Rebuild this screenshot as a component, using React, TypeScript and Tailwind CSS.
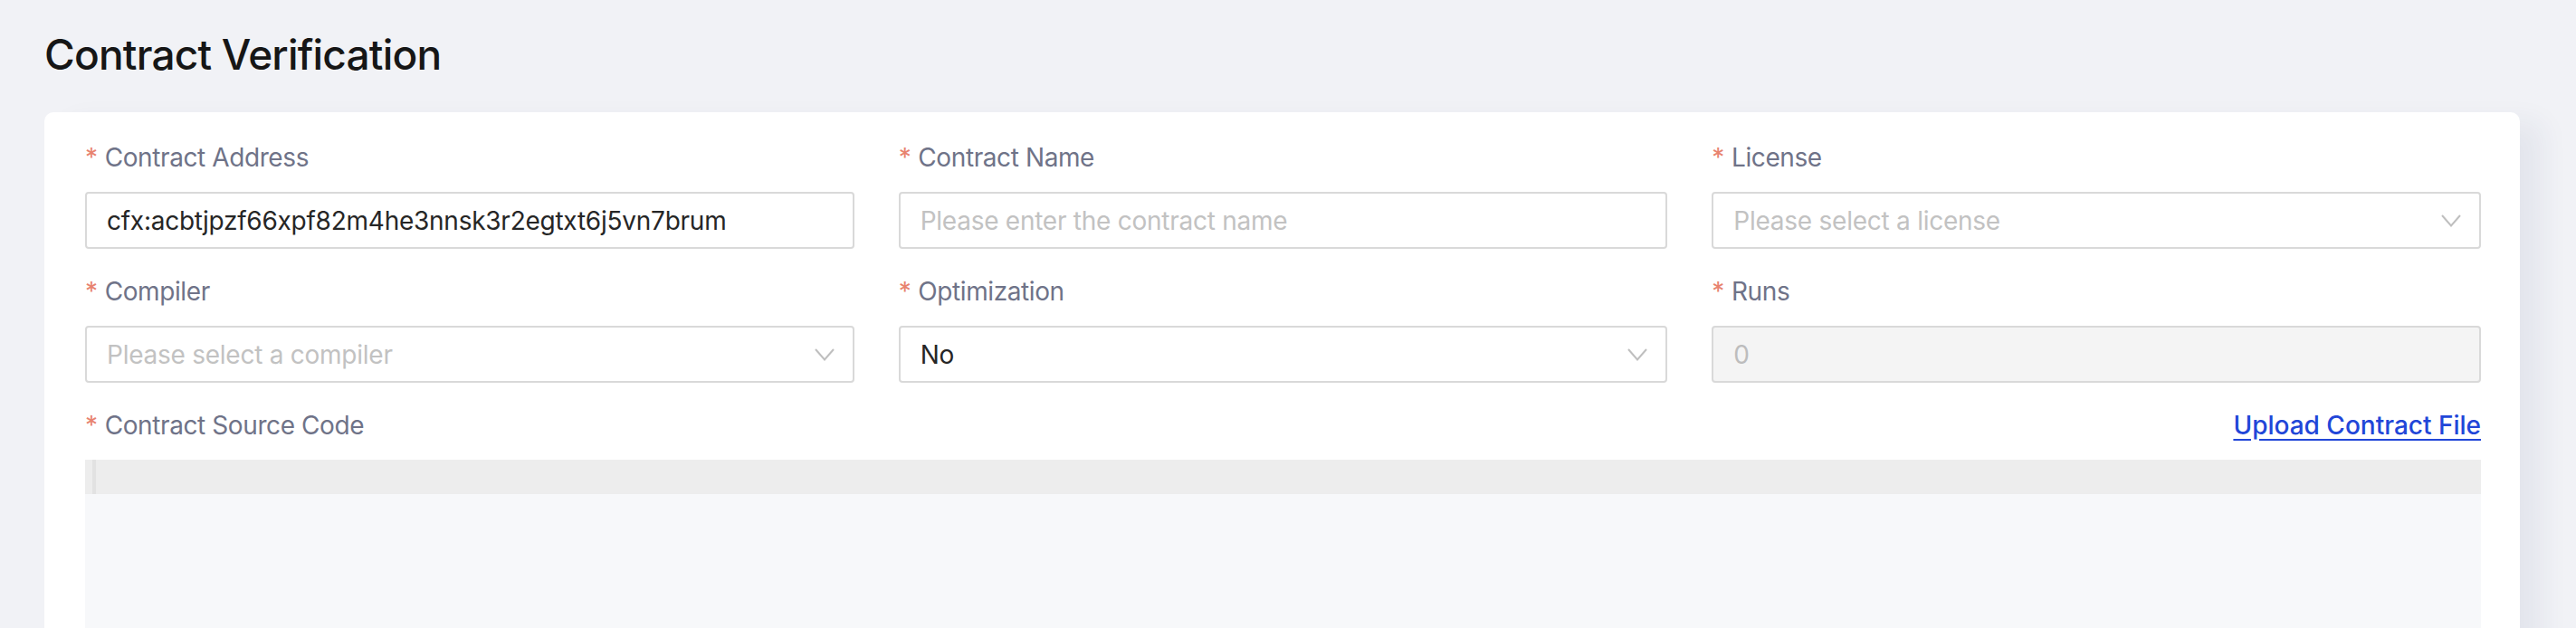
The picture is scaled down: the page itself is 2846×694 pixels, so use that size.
import type { ReactNode } from "react";

const font = { fontFamily: "Inter, 'Noto Sans', sans-serif" };

function Label({ children }: { children: ReactNode }) {
  return (
    <div className="flex h-[40px] items-center text-[28px] leading-[40px] tracking-[-0.4px] text-[#6f7388]">
      <span className="mr-[8px] text-[#e8836f]">*</span>
      <span>{children}</span>
    </div>
  );
}

function Chevron() {
  return (
    <svg width="22" height="14" viewBox="0 0 22 14" fill="none" className="shrink-0">
      <path d="M1 1l10 11.5L21 1" stroke="#bfbfbf" strokeWidth="2" />
    </svg>
  );
}

function TextField({ value, placeholder }: { value?: string; placeholder?: string }) {
  return (
    <div className="flex h-[63px] items-center rounded-[4px] border-2 border-[#d9d9d9] bg-white px-[22px] text-[28px] tracking-[-0.25px]">
      {value ? (
        <span className="text-[#262626]">{value}</span>
      ) : (
        <span className="text-[#c2c2c2]">{placeholder}</span>
      )}
    </div>
  );
}

function SelectField({ value, placeholder }: { value?: string; placeholder?: string }) {
  return (
    <div className="flex h-[63px] items-center justify-between rounded-[4px] border-2 border-[#d9d9d9] bg-white pl-[22px] pr-[20px] text-[28px] tracking-[-0.25px]">
      {value ? (
        <span className="text-[#262626]">{value}</span>
      ) : (
        <span className="text-[#c2c2c2]">{placeholder}</span>
      )}
      <Chevron />
    </div>
  );
}

function Field({ label, children }: { label: string; children: ReactNode }) {
  return (
    <div className="flex flex-col">
      <Label>{label}</Label>
      <div className="mt-[18px]">{children}</div>
    </div>
  );
}

export default function App() {
  return (
    <div
      className="h-[694px] overflow-hidden bg-[#f1f2f6] pl-[49px] pr-[62px] pt-[32px]"
      style={font}
    >
      <h1 className="text-[46px] leading-[56px] font-medium tracking-[-0.8px] text-[#161616]">
        Contract Verification
      </h1>

      <div className="mt-[36px] rounded-[10px] bg-white pl-[45px] pr-[43px] pt-[30px] pb-[40px] shadow-[26px_10px_30px_rgba(40,50,100,0.06)]">
        <div className="grid grid-cols-3 gap-x-[49px] gap-y-[27px]">
          <Field label="Contract Address">
            <TextField value="cfx:acbtjpzf66xpf82m4he3nnsk3r2egtxt6j5vn7brum" />
          </Field>
          <Field label="Contract Name">
            <TextField placeholder="Please enter the contract name" />
          </Field>
          <Field label="License">
            <SelectField placeholder="Please select a license" />
          </Field>
          <Field label="Compiler">
            <SelectField placeholder="Please select a compiler" />
          </Field>
          <Field label="Optimization">
            <SelectField value="No" />
          </Field>
          <Field label="Runs">
            <div className="flex h-[63px] items-center rounded-[4px] border-2 border-[#d9d9d9] bg-[#f4f4f4] px-[22px] text-[28px] text-[#bdbdbd]">
              0
            </div>
          </Field>
        </div>

        <div className="mt-[27px] flex items-center justify-between">
          <Label>Contract Source Code</Label>
          <a className="text-[28px] leading-[40px] font-medium text-[#2146d8] underline underline-offset-[5px]">
            Upload Contract File
          </a>
        </div>

        <div className="mt-[18px] h-[400px] bg-[#f7f8fa]">
          <div className="flex h-[38px] bg-[#ededed]">
            <div className="ml-[8px] w-[4px] bg-[#e2e2e2]" />
          </div>
        </div>
      </div>
    </div>
  );
}
